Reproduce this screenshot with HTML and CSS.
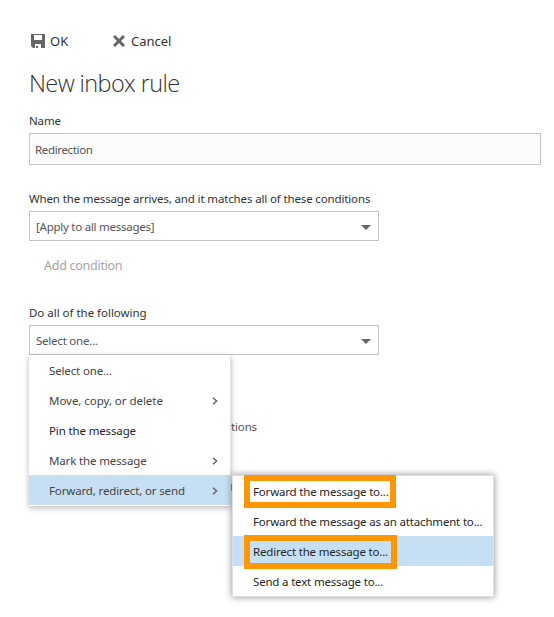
FILE: index.html
```html
<!DOCTYPE html>
<html lang="en">
<head>
<meta charset="utf-8">
<title>New inbox rule</title>
<link rel="stylesheet" href="styles.css">
</head>
<body>
<main class="page">
  <div class="toolbar">
    <div class="action ok">
      <svg width="14" height="14" viewBox="0 0 14 14"><path fill="#666" fill-rule="evenodd" d="M0 0H14V14H2L0 12V0ZM3 1V6H11V1ZM4 10V14H5V12H7V14H10V10Z"/></svg>
      <span>OK</span>
    </div>
    <div class="action cancel">
      <svg width="12" height="12" viewBox="0 0 12 12"><path stroke="#666" stroke-width="3" d="M1 1L11 11M11 1L1 11"/></svg>
      <span>Cancel</span>
    </div>
  </div>
  <h1 class="title">New inbox rule</h1>
  <div class="label name-label"><span>Name</span></div>
  <div class="input"><span>Redirection</span></div>
  <div class="label when-label"><span>When the message arrives, and it matches all of these conditions</span></div>
  <div class="select"><span class="apply">[Apply to all messages]</span><i class="caret"></i></div>
  <div class="add"><span>Add condition</span></div>
  <div class="label do-label"><span>Do all of the following</span></div>
  <div class="select"><span class="one">Select one...</span><i class="caret"></i>
    <div class="menu">
      <div class="item"><span>Select one...</span></div>
      <div class="item move"><span>Move, copy, or delete</span><svg class="chev" width="6" height="8" viewBox="0 0 6 8"><path d="M1 .7L4.6 4L1 7.3"/></svg></div>
      <div class="item dark"><span>Pin the message</span></div>
      <div class="item"><span>Mark the message</span><svg class="chev" width="6" height="8" viewBox="0 0 6 8"><path d="M1 .7L4.6 4L1 7.3"/></svg></div>
      <div class="item active"><span>Forward, redirect, or send</span><svg class="chev" width="6" height="8" viewBox="0 0 6 8"><path d="M1 .7L4.6 4L1 7.3"/></svg></div>
      <div class="menu submenu">
        <div class="item"><span>Forward the message to...</span><i class="mark mark-forward"></i></div>
        <div class="item"><span>Forward the message as an attachment to...</span></div>
        <div class="item active"><span>Redirect the message to...</span><i class="mark mark-redirect"></i></div>
        <div class="item"><span>Send a text message to...</span></div>
      </div>
    </div>
  </div>
  <div class="except"><span>tions</span></div>
  <div class="edge"></div>
</main>
</body>
</html>
```
FILE: styles.css
```css
* { box-sizing: border-box; }
body {
  margin: 0;
  width: 554px;
  height: 617px;
  overflow: hidden;
  background: #fff;
  color: #333;
  font: 11.5px/18px "Noto Sans", "Open Sans", sans-serif;
  letter-spacing: -.14px;
}
span { white-space: nowrap; }
svg, .caret { display: block; flex: none; }
.page { padding: 31px 13px 0 29px; }
.toolbar { display: flex; height: 20px; font-size: 13px; line-height: 20px; letter-spacing: 0; }
.action { display: flex; align-items: center; }
.ok { width: 84px; padding-left: 2px; gap: 5px; }
.cancel { gap: 6px; }
.title {
  margin: 15px 0 0;
  height: 34px;
  font: 300 23.5px/34px "Open Sans", "Noto Sans", sans-serif;
  letter-spacing: -.6px;
  word-spacing: 0;
}
.label { height: 18px; }
.name-label { margin-top: 12px; }
.input {
  margin-top: 3px;
  height: 32px;
  padding: 7px 5px;
  letter-spacing: -.35px;
  border: 1px solid #c6c6c6;
  background: #fcfcfc;
  color: #555;
}
.when-label { margin-top: 25px; }
.select {
  position: relative;
  display: flex;
  align-items: center;
  justify-content: space-between;
  width: 350px;
  height: 30px;
  margin-top: 3px;
  padding: 2px 7px 0 6px;
  border: 1px solid #c6c6c6;
  background: #fff;
  color: #555;
}
.apply { letter-spacing: -.25px; }
.one { letter-spacing: -.22px; }
.caret {
  border: 5px solid transparent;
  border-top-color: #666;
  border-bottom: 0;
}
.add { margin: 15px 0 0 15px; height: 20px; font-size: 12.5px; line-height: 20px; letter-spacing: -.27px; color: #a6a6a6; }
.do-label { margin-top: 28px; letter-spacing: -.02px; }
.menu {
  position: absolute;
  z-index: 2;
  left: -1px;
  top: 29px;
  width: 202px;
  height: 151px;
  background: #fff;
  border-right: 1px solid #e0e0e0;
  box-shadow: 0 2px 6px rgba(0, 0, 0, .28);
}
.item {
  position: relative;
  display: flex;
  align-items: center;
  justify-content: space-between;
  height: 30px;
  padding: 2px 12px 0 20px;
  color: #444;
}
.move { letter-spacing: -.04px; }
.item.dark, .submenu .item { color: #262626; }
.submenu .item { letter-spacing: -.18px; }
.active { background: #c7dff3; }
.chev path { fill: none; stroke: #666; stroke-width: 1.5; }
.submenu {
  left: 203px;
  top: 120px;
  width: 262px;
  height: 122px;
  border: 1px solid #e0e0e0;
  box-shadow: 0 0 7px rgba(0, 0, 0, .45);
}
.mark { position: absolute; border: 6px solid #ff9800; }
.mark-forward { left: 11px; top: -1px; width: 152px; height: 33px; }
.mark-redirect { left: 11px; top: -1px; width: 153px; height: 34px; }
.except { display: flex; justify-content: flex-end; width: 228px; margin-top: 63px; color: #555; }
.edge { width: 1px; height: 7px; margin: 48px 0 0 202px; background: #7fa5c6; }
```
